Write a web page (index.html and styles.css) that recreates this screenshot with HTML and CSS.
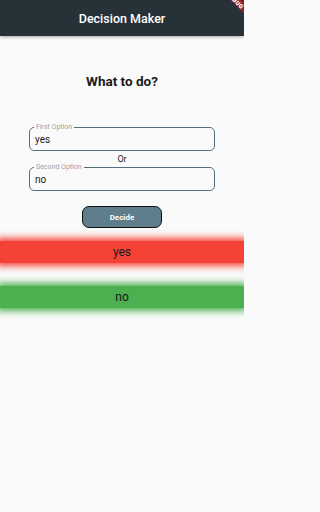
FILE: index.html
```html
<!DOCTYPE html>
<html>
<head>
<meta charset="utf-8">
<link rel="stylesheet" href="styles.css">
</head>
<body>
<div class="screen">
  <header class="appbar">
    <span class="appbar-title">Decision Maker</span>
  </header>
  <div class="debug-ribbon"><span>DEBUG</span></div>
  <main class="content">
    <h1 class="question">What to do?</h1>
    <div class="form">
      <div class="field">
        <span class="field-label">First Option</span>
        <span class="field-value">yes</span>
      </div>
      <div class="or">Or</div>
      <div class="field">
        <span class="field-label">Second Option</span>
        <span class="field-value">no</span>
      </div>
      <button class="decide">Decide</button>
    </div>
    <div class="bands">
      <div class="band band-red">yes</div>
      <div class="band band-green">no</div>
    </div>
  </main>
</div>
</body>
</html>
```

FILE: styles.css
```css
html, body {
  margin: 0;
  padding: 0;
  overflow: hidden;
}
body {
  background: #fafafa;
  font-family: Roboto, "Noto Sans", sans-serif;
}
.screen {
  width: 244px;
  height: 512px;
  overflow: hidden;
  position: relative;
  background: #fafafa;
}
.appbar {
  height: 36px;
  background: #263238;
  display: flex;
  align-items: center;
  justify-content: center;
  box-shadow: 0 1px 3px rgba(0,0,0,0.35);
  position: relative;
  z-index: 1;
}
.appbar-title {
  color: #ffffff;
  font-size: 12.5px;
  font-weight: 500;
}
.debug-ribbon {
  position: absolute;
  top: 10px;
  left: 210px;
  width: 80px;
  height: 8px;
  background: rgba(183, 28, 28, 0.75);
  transform: rotate(45deg);
  transform-origin: center;
  display: flex;
  align-items: center;
  justify-content: center;
  z-index: 2;
}
.debug-ribbon span {
  color: #fff;
  font-size: 6px;
  font-weight: 900;
  letter-spacing: 0.3px;
  margin-right: 40px;
}
.content {
  display: flex;
  flex-direction: column;
  align-items: center;
}
.question {
  margin: 35px 0 0 0;
  font-size: 13.5px;
  font-weight: 700;
  color: #1a1a1a;
  line-height: 20px;
}
.form {
  width: 186px;
  margin-top: 36px;
  display: flex;
  flex-direction: column;
  align-items: center;
}
.field {
  position: relative;
  width: 100%;
  box-sizing: border-box;
  height: 24px;
  border: 1.3px solid #546e7a;
  border-radius: 5px;
  display: flex;
  align-items: center;
  padding: 0 5px;
}
.field-label {
  position: absolute;
  top: -5px;
  left: 4px;
  padding: 0 2px;
  background: #fafafa;
  font-size: 7px;
  line-height: 8px;
  color: #9e9e9e;
}
.field-value {
  font-size: 10px;
  color: #1a1a1a;
  margin-top: 1px;
}
.or {
  font-size: 9px;
  line-height: 10px;
  color: #1a1a1a;
  margin: 3px 0 3px;
}
.decide {
  margin-top: 15px;
  width: 80px;
  height: 22px;
  box-sizing: border-box;
  background: #607d8b;
  border: 1.5px solid #111;
  border-radius: 7px;
  color: #fff;
  font-family: Roboto, sans-serif;
  font-size: 8px;
  font-weight: 700;
  padding: 0;
}
.bands {
  width: 100%;
  margin-top: 13px;
  display: flex;
  flex-direction: column;
  gap: 23px;
}
.band {
  height: 22px;
  display: flex;
  align-items: center;
  justify-content: center;
  font-size: 12px;
  color: #1a1a1a;
}
.band-red {
  background: #f44336;
  box-shadow: 0 0 7px 3px #f44336;
}
.band-green {
  background: #4caf50;
  box-shadow: 0 0 7px 3px #4caf50;
}
```
